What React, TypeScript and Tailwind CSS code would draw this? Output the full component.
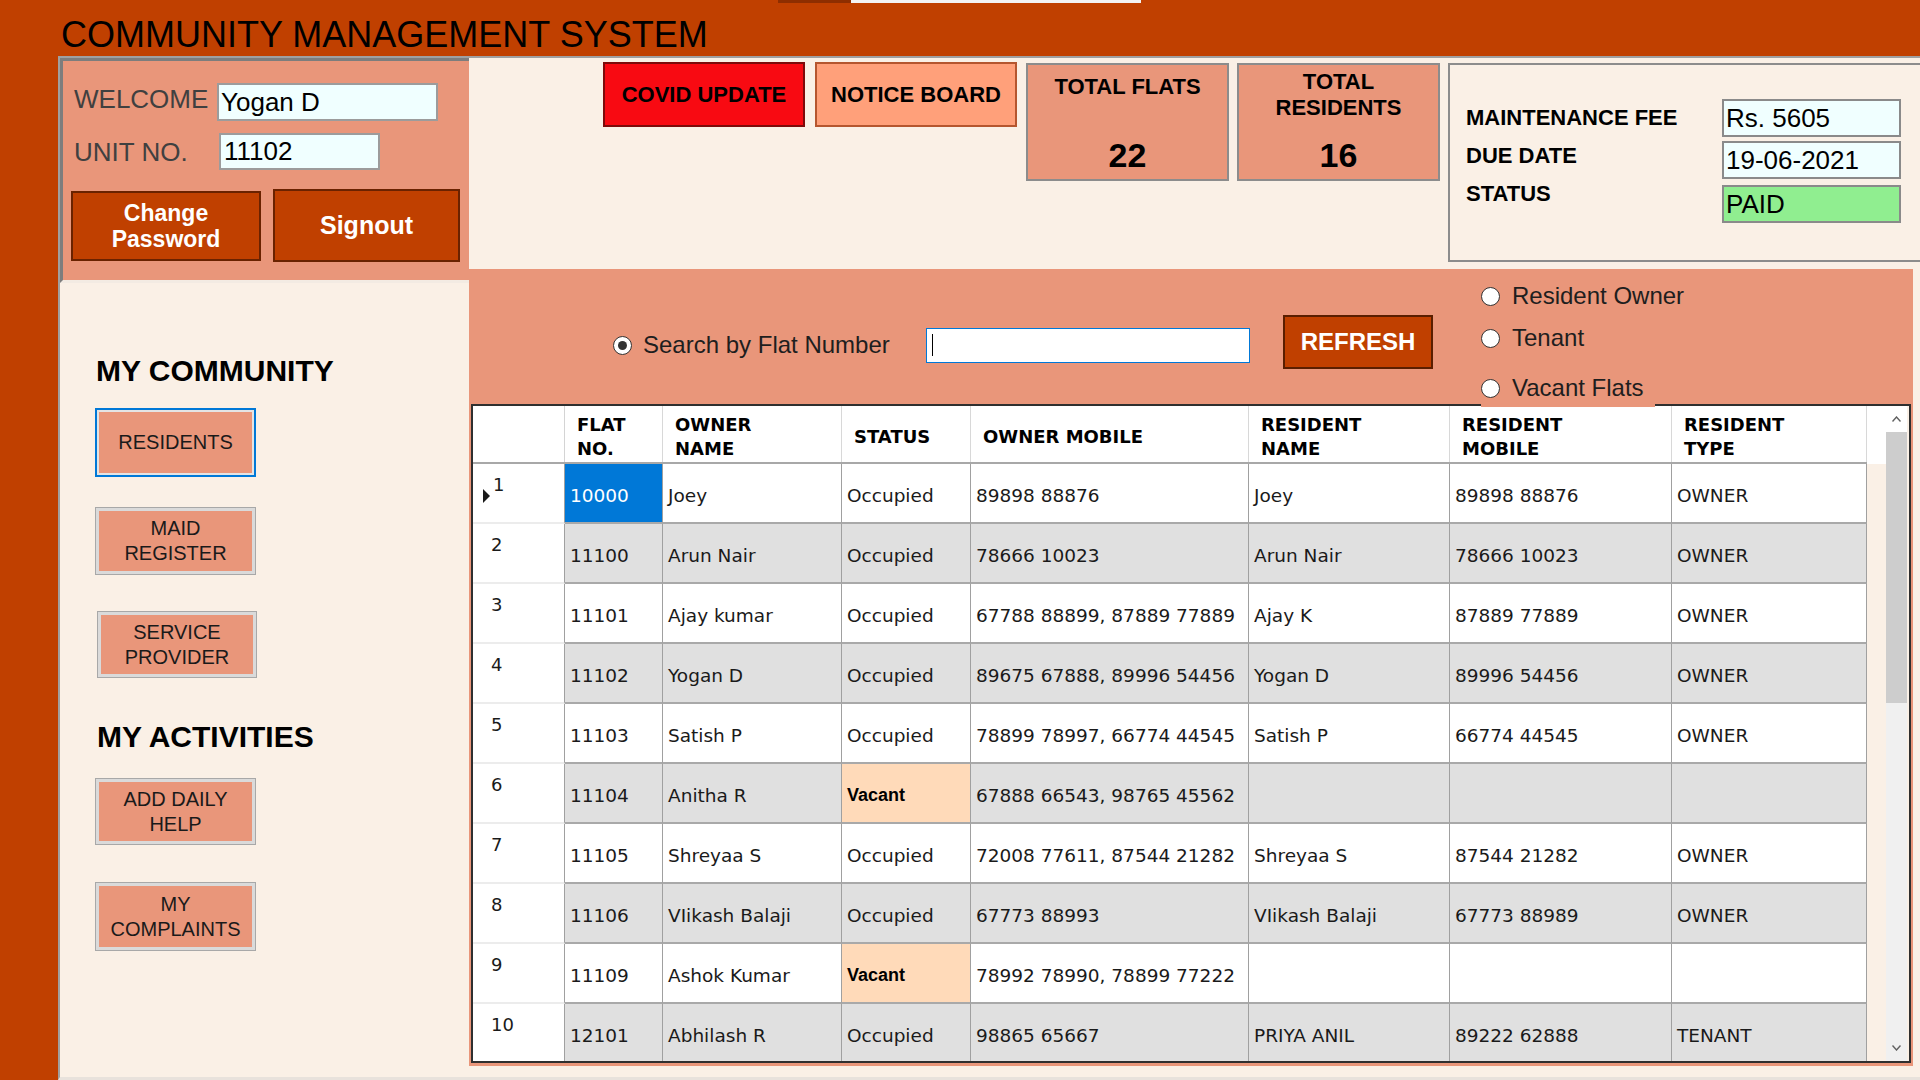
import React from "react";

const columns = [
  { title: ["FLAT", "NO."], w: "w-[98px]" },
  { title: ["OWNER", "NAME"], w: "w-[179px]" },
  { title: ["STATUS"], w: "w-[129px]" },
  { title: ["OWNER MOBILE"], w: "w-[278px]" },
  { title: ["RESIDENT", "NAME"], w: "w-[201px]" },
  { title: ["RESIDENT", "MOBILE"], w: "w-[222px]" },
  { title: ["RESIDENT", "TYPE"], w: "w-[195px]" },
];

const flats: string[][] = [
  ["10000", "Joey", "Occupied", "89898 88876", "Joey", "89898 88876", "OWNER"],
  ["11100", "Arun Nair", "Occupied", "78666 10023", "Arun Nair", "78666 10023", "OWNER"],
  ["11101", "Ajay kumar", "Occupied", "67788 88899, 87889 77889", "Ajay K", "87889 77889", "OWNER"],
  ["11102", "Yogan D", "Occupied", "89675 67888, 89996 54456", "Yogan D", "89996 54456", "OWNER"],
  ["11103", "Satish P", "Occupied", "78899 78997, 66774 44545", "Satish P", "66774 44545", "OWNER"],
  ["11104", "Anitha R", "Vacant", "67888 66543, 98765 45562", "", "", ""],
  ["11105", "Shreyaa S", "Occupied", "72008 77611, 87544 21282", "Shreyaa S", "87544 21282", "OWNER"],
  ["11106", "VIikash Balaji", "Occupied", "67773 88993", "VIikash Balaji", "67773 88989", "OWNER"],
  ["11109", "Ashok Kumar", "Vacant", "78992 78990, 78899 77222", "", "", ""],
  ["12101", "Abhilash R", "Occupied", "98865 65667", "PRIYA ANIL", "89222 62888", "TENANT"],
];

function Radio({ checked }: { checked?: boolean }) {
  return (
    <span className="flex h-[19px] w-[19px] shrink-0 items-center justify-center rounded-full border border-[#333333] bg-white">
      {checked && <span className="h-[9px] w-[9px] rounded-full bg-[#333333]" />}
    </span>
  );
}

function NavButton({ lines, active, extra }: { lines: string[]; active?: boolean; extra: string }) {
  return (
    <div
      className={
        active
          ? `border-2 border-[#0078d7] bg-[#e4e4e4] p-[2px] ${extra}`
          : `border border-[#a8a8a8] bg-[#dadada] p-[3px] ${extra}`
      }
    >
      <div className="flex h-full w-full flex-col items-center justify-center bg-[#e9967a] text-[20px] leading-[25px] text-[#1a1a1a]">
        {lines.map((l) => (
          <span key={l}>{l}</span>
        ))}
      </div>
    </div>
  );
}

function StatBox({ label, value, twoLine }: { label: string[]; value: string; twoLine?: boolean }) {
  return (
    <div className="mt-[1px] flex h-[118px] w-[203px] shrink-0 flex-col items-center border-2 border-[#8c8c8c] bg-[#e9967a] text-black">
      <div className={twoLine ? "flex flex-col items-center pt-[4px]" : "flex flex-col items-center pt-[9px]"}>
        {label.map((l) => (
          <span key={l} className="text-[22px] font-bold leading-[26px]">
            {l}
          </span>
        ))}
      </div>
      <span className={twoLine ? "mt-[17px] text-[34px] font-bold leading-[34px]" : "mt-[38px] text-[34px] font-bold leading-[34px]"}>
        {value}
      </span>
    </div>
  );
}

export default function App() {
  return (
    <div className="flex h-[1080px] w-[1920px] flex-col overflow-hidden bg-[#c04000] font-['Liberation_Sans',Arial,sans-serif]">
      {/* title bar */}
      <div className="h-[56px] shrink-0">
        <div className="flex h-[3px]">
          <div className="ml-[778px] w-[73px] bg-[#8e2e00]" />
          <div className="w-[290px] bg-[#f3f3f3]" />
        </div>
        <h1 className="ml-[61px] mt-[14px] text-[36px] leading-[36px] text-black">COMMUNITY MANAGEMENT SYSTEM</h1>
      </div>

      <div className="flex min-h-0 flex-1">
        <div className="w-[58px] shrink-0" />
        <div className="flex flex-1 border-b-[3px] border-l-2 border-t-2 border-b-[#e8e2dc] border-l-[#a0a0a0] border-t-[#a0a0a0] bg-[#faf0e6]">
          {/* left column */}
          <div className="flex w-[409px] shrink-0 flex-col">
            <div className="flex h-[225px] shrink-0 flex-col border-b-[3px] border-l-[3px] border-t-[3px] border-b-[#f3ebe3] border-l-[#7d7d7d] border-t-[#7d7d7d] bg-[#e9967a]">
              <div className="mt-[22px] flex h-[38px] items-center">
                <span className="mb-[6px] ml-[11px] w-[143px] text-[26px] text-[#404040]">WELCOME</span>
                <div className="flex h-[38px] w-[221px] items-center border-2 border-[#9c9c9c] bg-[#f0ffff] pl-[2px] text-[26px] text-black">
                  Yogan D
                </div>
              </div>
              <div className="mt-[12px] flex h-[37px] items-center">
                <span className="ml-[11px] mt-[2px] w-[145px] text-[26px] text-[#404040]">UNIT NO.</span>
                <div className="flex h-[37px] w-[161px] items-center border-2 border-[#9c9c9c] bg-[#f0ffff] pl-[3px] text-[26px] text-black">
                  11102
                </div>
              </div>
              <div className="mt-[19px] flex h-[73px] items-center">
                <div className="ml-[8px] flex h-[70px] w-[190px] flex-col items-center justify-center border-2 border-[#6a2200] bg-[#c04000] text-[23px] font-bold leading-[26px] text-white">
                  <span>Change</span>
                  <span>Password</span>
                </div>
                <div className="ml-[12px] flex h-[73px] w-[187px] items-center justify-center border-2 border-[#6a2200] bg-[#c04000] text-[25px] font-bold text-white">
                  Signout
                </div>
              </div>
            </div>

            <div className="flex flex-1 flex-col items-start pl-[35px] text-black">
              <h2 className="ml-[1px] mt-[73px] text-[30px] font-bold leading-[29px]">MY COMMUNITY</h2>
              <NavButton lines={["RESIDENTS"]} active extra="mt-[23px] h-[69px] w-[161px]" />
              <NavButton lines={["MAID", "REGISTER"]} extra="mt-[30px] h-[68px] w-[161px]" />
              <NavButton lines={["SERVICE", "PROVIDER"]} extra="ml-[2px] mt-[36px] h-[67px] w-[160px]" />
              <h2 className="ml-[2px] mt-[44px] text-[30px] font-bold leading-[29px]">MY ACTIVITIES</h2>
              <NavButton lines={["ADD DAILY", "HELP"]} extra="mt-[27px] h-[67px] w-[161px]" />
              <NavButton lines={["MY", "COMPLAINTS"]} extra="mt-[37px] h-[69px] w-[161px]" />
            </div>
          </div>

          {/* right column */}
          <div className="flex min-w-0 flex-1 flex-col">
            <div className="flex h-[211px] shrink-0 items-start pl-[134px] pt-[4px]">
              <div className="flex h-[65px] w-[202px] shrink-0 items-center justify-center border-2 border-[#7e0a0a] bg-[#f80a12] text-[22px] font-bold text-black">
                COVID UPDATE
              </div>
              <div className="ml-[10px] flex h-[65px] w-[202px] shrink-0 items-center justify-center border-2 border-[#b5562f] bg-[#ffa07a] text-[22px] font-bold text-black">
                NOTICE BOARD
              </div>
              <div className="ml-[9px]">
                <StatBox label={["TOTAL FLATS"]} value="22" />
              </div>
              <div className="ml-[8px]">
                <StatBox label={["TOTAL", "RESIDENTS"]} value="16" twoLine />
              </div>
              <div className="ml-[8px] mt-[1px] flex h-[199px] w-[500px] shrink-0 border-2 border-[#8c8c8c] pl-[16px] text-black">
                <div className="flex w-[256px] shrink-0 flex-col pt-[34px] text-[22px] font-bold leading-[38px]">
                  <span>MAINTENANCE FEE</span>
                  <span>DUE DATE</span>
                  <span>STATUS</span>
                </div>
                <div className="flex flex-col pt-[34px] text-[26px]">
                  <div className="flex h-[38px] w-[179px] items-center border-2 border-[#8a8a8a] bg-[#f0ffff] pl-[2px]">Rs. 5605</div>
                  <div className="mt-[4px] flex h-[38px] w-[179px] items-center border-2 border-[#8a8a8a] bg-[#f0ffff] pl-[2px]">19-06-2021</div>
                  <div className="mt-[6px] flex h-[38px] w-[179px] items-center border-2 border-[#8a8a8a] bg-[#90ee90] pl-[2px]">PAID</div>
                </div>
              </div>
            </div>

            <div className="flex h-[797px] shrink-0">
              <div className="flex w-[1444px] shrink-0 flex-col bg-[#e9967a]">
                {/* search bar */}
                <div className="flex h-[135px] shrink-0 items-start text-[24px] text-[#1e1e1e]">
                  <div className="ml-[144px] mt-[46px] flex items-center">
                    <Radio checked />
                    <span className="ml-[11px] w-[283px]">Search by Flat Number</span>
                    <div className="flex h-[35px] w-[324px] items-center border border-[#0078d7] bg-white pl-[5px]">
                      <span className="h-[22px] w-[1px] bg-black" />
                    </div>
                    <div className="mb-[6px] ml-[33px] flex h-[54px] w-[150px] items-center justify-center border-2 border-[#5a1e00] bg-[#c04000] font-bold text-white">
                      REFRESH
                    </div>
                  </div>
                  <div className="relative z-10 ml-[48px] flex flex-col pt-[12px]">
                    <div className="flex h-[30px] items-center">
                      <Radio />
                      <span className="ml-[12px]">Resident Owner</span>
                    </div>
                    <div className="mt-[12px] flex h-[30px] items-center">
                      <Radio />
                      <span className="ml-[12px]">Tenant</span>
                    </div>
                    <div className="mt-[20px] flex h-[34px] items-center self-start bg-[#e9967a] pb-[4px] pr-[11px]">
                      <Radio />
                      <span className="ml-[12px]">Vacant Flats</span>
                    </div>
                  </div>
                </div>

                {/* grid */}
                <div className="ml-[2px] flex h-[659px] w-[1440px] shrink-0 overflow-hidden border-2 border-[#2f2f2f] bg-[#faf0e6] font-['DejaVu_Sans',sans-serif] text-[#1a1a1a]">
                  <div className="flex w-[1394px] shrink-0 flex-col">
                    <div className="flex h-[58px] shrink-0 border-b-2 border-[#a8a8a8] bg-white">
                      <div className="w-[92px] shrink-0 border-r border-[#d4d4d4]" />
                      {columns.map((c) => (
                        <div
                          key={c.title.join(" ")}
                          className={`${c.w} flex shrink-0 flex-col justify-center border-r border-[#d8d8d8] pl-[12px] pt-[5px] text-[18px] font-bold leading-[24px] text-black`}
                        >
                          {c.title.map((t) => (
                            <span key={t}>{t}</span>
                          ))}
                        </div>
                      ))}
                    </div>
                    {flats.map((row, ri) => (
                      <div key={row[0]} className="flex h-[60px] shrink-0">
                        <div className="flex w-[92px] shrink-0 items-start border-b-2 border-r border-b-[#ececec] border-r-[#a0a0a0] bg-white pl-[10px] text-[18px] leading-[18px]">
                          {ri === 0 ? (
                            <>
                              <svg className="mt-[25px] shrink-0" width="7" height="14" viewBox="0 0 7 14">
                                <polygon points="0,0 7,7 0,14" fill="#1a1a1a" />
                              </svg>
                              <span className="ml-[3px] pt-[12px]">1</span>
                            </>
                          ) : (
                            <span className="ml-[8px] pt-[12px]">{ri + 1}</span>
                          )}
                        </div>
                        {row.map((v, ci) => {
                          const selected = ri === 0 && ci === 0;
                          const vacant = v === "Vacant";
                          const bg = selected
                            ? "bg-[#0078d7] text-white"
                            : vacant
                            ? "bg-[#ffdab9]"
                            : ri % 2 === 1
                            ? "bg-[#e0e0e0]"
                            : "bg-white";
                          return (
                            <div
                              key={ci}
                              className={`${columns[ci].w} ${bg} flex shrink-0 items-center overflow-hidden whitespace-nowrap border-b-2 border-r border-b-[#a9a9a9] border-r-[#a0a0a0] pl-[5px] pt-[5px] text-[18.5px]`}
                            >
                              {vacant ? (
                                <span className="font-['Liberation_Sans',Arial,sans-serif] text-[18px] font-bold text-black">Vacant</span>
                              ) : (
                                v
                              )}
                            </div>
                          );
                        })}
                      </div>
                    ))}
                  </div>
                  <div className="flex w-[19px] shrink-0 flex-col">
                    <div className="h-[58px] bg-white" />
                  </div>
                  <div className="flex w-[21px] shrink-0 flex-col bg-[#f0f0f0]">
                    <div className="flex h-[26px] shrink-0 items-center justify-center bg-white">
                      <svg width="9" height="6" viewBox="0 0 9 6">
                        <polyline points="0.5,5.5 4.5,1 8.5,5.5" fill="none" stroke="#606060" strokeWidth="1.4" />
                      </svg>
                    </div>
                    <div className="h-[271px] shrink-0 bg-[#cdcdcd]" />
                    <div className="flex-1" />
                    <div className="flex h-[26px] shrink-0 items-center justify-center">
                      <svg width="9" height="6" viewBox="0 0 9 6">
                        <polyline points="0.5,0.5 4.5,5 8.5,0.5" fill="none" stroke="#606060" strokeWidth="1.4" />
                      </svg>
                    </div>
                  </div>
                  <div className="w-[2px] shrink-0" />
                </div>
              </div>
              <div className="flex-1" />
            </div>
          </div>
        </div>
      </div>
    </div>
  );
}
